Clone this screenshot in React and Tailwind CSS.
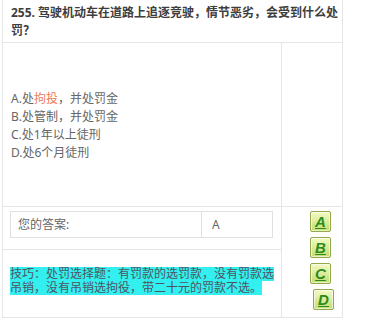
import React from "react";

const font = "font-['Noto_Sans','Noto_Sans_CJK_SC',sans-serif]";

function Btn({ letter, extra = "" }) {
  return (
    <div
      className={`w-[21px] h-[21px] flex items-center justify-center rounded-[2px] border border-[#93a84a] bg-gradient-to-b from-[#f3fbc4] to-[#c3dc70] shadow-[inset_0_0_0_1px_rgba(255,255,255,0.6)] ${extra}`}
    >
      <span className="font-['Liberation_Sans',sans-serif] text-[15px] leading-none font-bold italic underline text-[#2b8c1c]">
        {letter}
      </span>
    </div>
  );
}

export default function App() {
  return (
    <div className={`w-[365px] h-[320px] bg-white ${font}`}>
      <div className="ml-[2px] w-[341px] border-x border-b border-[#e6e6e6]">
        <div className="pl-[8px] pr-[2px] pt-[4px] pb-[2px] text-[12px] leading-[18px] font-bold text-[#3e3e3e] border-b border-[#e6e6e6] h-[43px]">
          255. 驾驶机动车在道路上追逐竞驶，情节恶劣，会受到什么处罚？
        </div>
        <div className="flex h-[164px] border-b border-[#e6e6e6]">
          <div className="w-[279px] border-r border-[#e6e6e6] pl-[8px] pt-[47px] text-[12px] leading-[18px] text-[#666]">
            <div>
              A.处<span className="text-[#ef7c55]">拘投</span>，并处罚金
            </div>
            <div>B.处管制，并处罚金</div>
            <div>C.处1年以上徒刑</div>
            <div>D.处6个月徒刑</div>
          </div>
          <div className="flex-1" />
        </div>
        <div className="flex">
          <div className="w-[279px] border-r border-[#e6e6e6]">
            <div className="h-[43px] border-b border-[#e6e6e6] pl-[7px] pt-[4px]">
              <div className="flex w-[263px] h-[27px] border border-[#e0e0e0] text-[12px] text-[#666]">
                <div className="w-[191px] border-r border-[#e0e0e0] flex items-center pl-[7px]">
                  您的答案:
                </div>
                <div className="flex-1 flex items-center pl-[10px]">A</div>
              </div>
            </div>
            <div className="h-[67px] pl-[7px] pr-[4px] pt-[17px] text-[12px] leading-[13px]">
              <span className="bg-[#33efef] text-[#4f5560] font-['Liberation_Sans','Noto_Sans_CJK_SC',sans-serif]">
                技巧：处罚选择题：有罚款的选罚款，没有罚款选吊销，没有吊销选拘役，带二十元的罚款不选。
              </span>
            </div>
          </div>
          <div className="flex-1 flex flex-col gap-[5px] pt-[4px] pl-[28px]">
            <Btn letter="A" />
            <Btn letter="B" />
            <Btn letter="C" />
            <Btn letter="D" extra="ml-[3px]" />
          </div>
        </div>
      </div>
    </div>
  );
}
